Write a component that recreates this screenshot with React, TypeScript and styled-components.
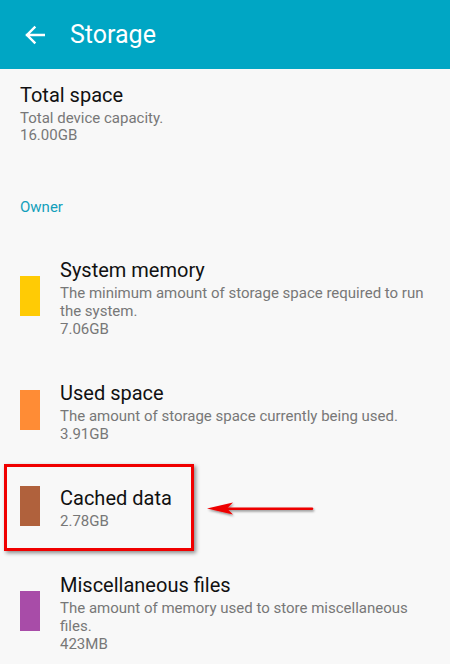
import styled, { createGlobalStyle } from 'styled-components';

const GlobalStyle = createGlobalStyle`
  html, body {
    margin: 0;
    padding: 0;
    background: #f8f8f8;
  }
  body {
    font-family: Roboto, "Noto Sans", sans-serif;
    -webkit-font-smoothing: antialiased;
  }
`;

const Screen = styled.div`
  width: 450px;
  height: 664px;
  overflow: hidden;
  background: #f8f8f8;
`;

const Header = styled.header`
  height: 69px;
  background: #00a6c4;
  display: flex;
  align-items: center;
  padding-left: 25px;
  gap: 25px;
`;

const BackButton = styled.button`
  border: 0;
  padding: 0;
  background: transparent;
  display: flex;
  width: 20px;
  height: 20px;
  cursor: pointer;
`;

const HeaderTitle = styled.h1`
  margin: 0;
  color: #ffffff;
  font-size: 25px;
  font-weight: 400;
  line-height: 30px;
`;

const Content = styled.main`
  padding: 14px 20px 0;
`;

const Title = styled.div`
  font-size: 20px;
  line-height: 24px;
  color: #111;
`;

const Sub = styled.div<{ $tight?: boolean }>`
  font-size: 15px;
  line-height: ${(p) => (p.$tight ? '17px' : '18px')};
  color: #777;
  margin-top: ${(p) => (p.$tight ? '3px' : '2px')};
`;

const SectionLabel = styled.div`
  margin-top: 55px;
  margin-bottom: 20px;
  font-size: 15px;
  line-height: 17px;
  color: #139fbb;
`;

const Row = styled.div`
  position: relative;
  display: flex;
  align-items: center;
  gap: 20px;
  padding: 21.5px 0;
`;

const Swatch = styled.div<{ $color: string }>`
  flex: none;
  width: 20px;
  height: 40px;
  margin-bottom: 3px;
  background: ${(p) => p.$color};
`;

const RowText = styled.div`
  display: flex;
  flex-direction: column;
`;

const Highlight = styled.div`
  position: absolute;
  left: -16px;
  top: 0;
  width: 190px;
  bottom: 0;
  box-sizing: border-box;
  border: 3px solid #f00000;
  box-shadow: 2px 2px 4px rgba(0, 0, 0, 0.45);
  pointer-events: none;
`;

const Pointer = styled.svg`
  position: absolute;
  left: 165px;
  top: 50%;
  margin-top: -8px;
  overflow: visible;
`;

type Item = {
  title: string;
  desc?: string;
  size: string;
  color: string;
  marked?: boolean;
};

const items: Item[] = [
  {
    title: 'System memory',
    desc: 'The minimum amount of storage space required to run the system.',
    size: '7.06GB',
    color: '#ffcb05',
  },
  {
    title: 'Used space',
    desc: 'The amount of storage space currently being used.',
    size: '3.91GB',
    color: '#ff8c35',
  },
  { title: 'Cached data', size: '2.78GB', color: '#b0613c', marked: true },
  {
    title: 'Miscellaneous files',
    desc: 'The amount of memory used to store miscellaneous files.',
    size: '423MB',
    color: '#a84ca8',
  },
];

function BackArrow() {
  return (
    <svg width="20" height="20" viewBox="0 0 20 20" fill="none">
      <path
        d="M19.5 10H2 M9.5 2.5L2 10l7.5 7.5"
        stroke="#fff"
        strokeWidth="2.4"
        strokeLinecap="square"
      />
    </svg>
  );
}

function RedArrow() {
  return (
    <Pointer width="130" height="16" viewBox="0 0 130 16">
      <defs>
        <filter id="sh" x="-10%" y="-50%" width="120%" height="200%">
          <feDropShadow dx="1" dy="1.5" stdDeviation="1" floodColor="#000" floodOpacity="0.45" />
        </filter>
      </defs>
      <g filter="url(#sh)">
        <path d="M40 8.8H127" stroke="#ee0000" strokeWidth="2.6" strokeLinecap="round" />
        <path d="M22 8.5L48 2.5L42 8.5L48 14.5Z" fill="#ee0000" />
      </g>
    </Pointer>
  );
}

export default function App() {
  return (
    <Screen>
      <GlobalStyle />
      <Header>
        <BackButton aria-label="Back">
          <BackArrow />
        </BackButton>
        <HeaderTitle>Storage</HeaderTitle>
      </Header>
      <Content>
        <Title>Total space</Title>
        <Sub $tight>
          Total device capacity.
          <br />
          16.00GB
        </Sub>
        <SectionLabel>Owner</SectionLabel>
        {items.map((it) => (
          <Row key={it.title}>
            <Swatch $color={it.color} />
            <RowText>
              <Title>{it.title}</Title>
              <Sub>
                {it.desc && (
                  <>
                    {it.desc}
                    <br />
                  </>
                )}
                {it.size}
              </Sub>
            </RowText>
            {it.marked && (
              <>
                <Highlight />
                <RedArrow />
              </>
            )}
          </Row>
        ))}
      </Content>
    </Screen>
  );
}
